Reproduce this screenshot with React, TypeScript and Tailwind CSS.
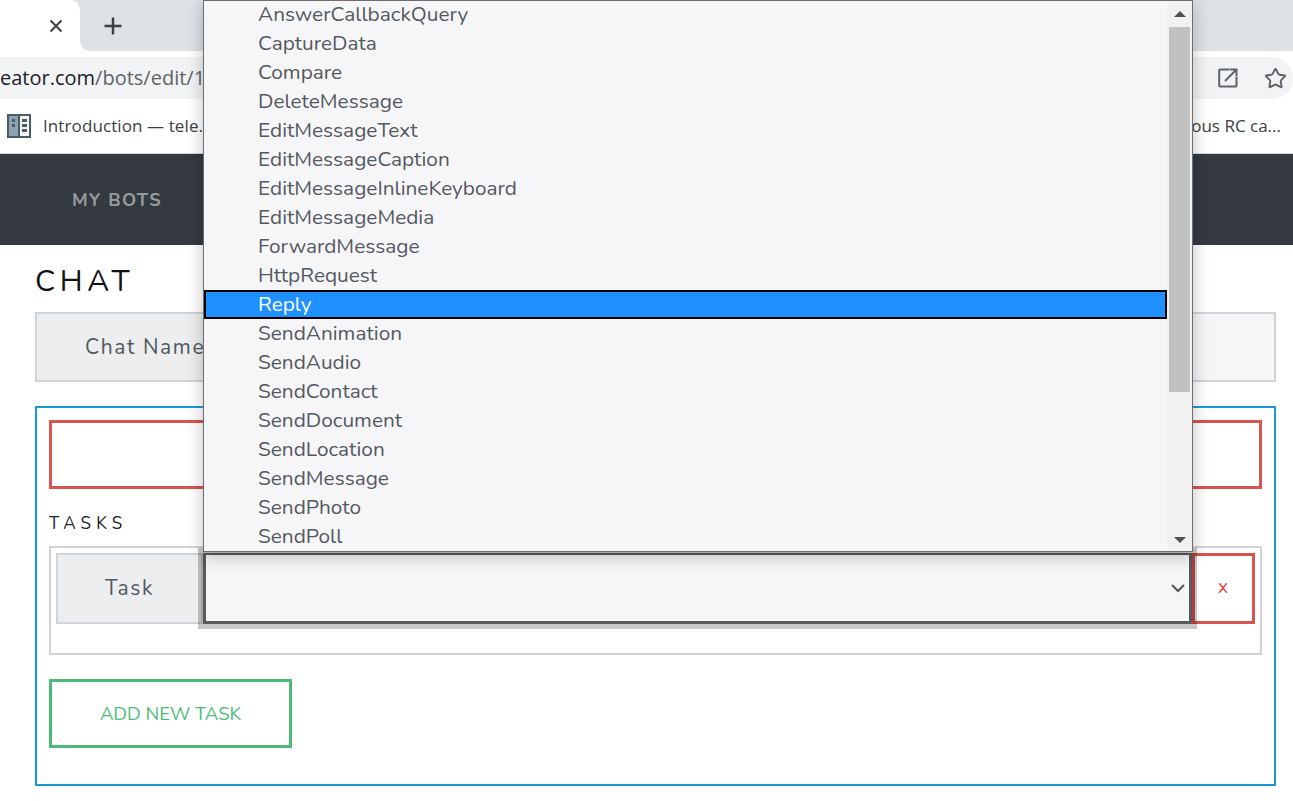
import React from "react";
import { Star } from "lucide-react";

const actions = [
  "AnswerCallbackQuery",
  "CaptureData",
  "Compare",
  "DeleteMessage",
  "EditMessageText",
  "EditMessageCaption",
  "EditMessageInlineKeyboard",
  "EditMessageMedia",
  "ForwardMessage",
  "HttpRequest",
  "Reply",
  "SendAnimation",
  "SendAudio",
  "SendContact",
  "SendDocument",
  "SendLocation",
  "SendMessage",
  "SendPhoto",
  "SendPoll",
];

const App: React.FC = () => {
  return (
    <div className="relative h-[801px] w-[1293px] overflow-hidden bg-white font-['Nunito','Noto_Sans',sans-serif]">
      {/* Browser tabs */}
      <div className="flex h-[51px] bg-white">
        <div className="w-[80px] bg-[#dee1e6]">
          <div className="flex h-full items-center justify-end rounded-tr-[10px] bg-white pr-[16px]">
            <svg width="16" height="16" viewBox="0 0 16 16" className="text-[#3c4043]">
              <path d="M2.5 2.5 L13.5 13.5 M13.5 2.5 L2.5 13.5" stroke="currentColor" strokeWidth="2" />
            </svg>
          </div>
        </div>
        <div className="flex flex-1 items-center rounded-bl-[10px] bg-[#dee1e6] pl-[23px]">
          <svg width="20" height="20" viewBox="0 0 20 20" className="text-[#3c4043]">
            <path d="M10 1.5 V18.5 M1.5 10 H18.5" stroke="currentColor" strokeWidth="2.5" />
          </svg>
        </div>
      </div>

      {/* Address bar */}
      <div className="flex h-[48px] items-end bg-white">
        <div className="flex h-[42px] w-[1293px] items-center overflow-hidden rounded-r-[21px] bg-[#f1f3f4] pr-[6px] font-['Open_Sans',sans-serif] text-[20px]">
          <span className="text-[#202124]">eator.com</span>
          <span className="text-[#5f6368]">/bots/edit/1</span>
          <div className="ml-auto flex items-center gap-[26px]">
            <svg width="20" height="20" viewBox="0 0 20 20" className="text-[#5f6368]">
              <path d="M11 1.5 H2 A0.8 0.8 0 0 0 1.2 2.3 V17.7 A0.8 0.8 0 0 0 2 18.5 H17.7 A0.8 0.8 0 0 0 18.5 17.7 V9 M18 2 L7 13 M11.5 1.5 H18.5 V8.5" fill="none" stroke="currentColor" strokeWidth="2" />
            </svg>
            <Star size={23} strokeWidth={2} className="text-[#5f6368]" />
          </div>
        </div>
      </div>

      {/* Bookmarks */}
      <div className="flex h-[55px] items-center justify-between border-b border-[#d5d8dc] bg-white pl-[7px] pr-[12px] font-['Open_Sans',sans-serif] text-[17px] text-[#3c4043]">
        <div className="flex items-center gap-[12px]">
          <svg width="24" height="24" viewBox="0 0 24 24">
            <rect width="24" height="24" fill="#4c5b66" />
            <rect x="2" y="2" width="9" height="20" fill="#8ba3b3" />
            <rect x="13" y="2" width="9" height="20" fill="#f2f4f5" />
            <rect x="5" y="5" width="3" height="3" fill="#4c5b66" />
            <rect x="5" y="10" width="3" height="3" fill="#4c5b66" />
            <rect x="15" y="5" width="5" height="3" fill="#4c5b66" />
            <rect x="15" y="10" width="5" height="3" fill="#4c5b66" />
            <rect x="15" y="15" width="5" height="3" fill="#4c5b66" />
          </svg>
          <span className="tracking-[0.1px]">Introduction — tele.</span>
        </div>
        <span>ous RC ca...</span>
      </div>

      {/* Navbar */}
      <nav className="flex h-[91px] items-center bg-[#343a40] pl-[72px] pt-[2px]">
        <span className="text-[18px] font-bold tracking-[1.5px] text-white/50">MY BOTS</span>
      </nav>

      {/* Page */}
      <main className="pl-[35px] pr-[17px]">
        <h1 className="mt-[17px] h-[50px] text-[30px] leading-[40px] tracking-[4.6px] text-[#111]">CHAT</h1>

        <div className="flex h-[70px] border-2 border-[#ced4da]">
          <div className="flex w-[200px] items-center bg-[#eceef0] pl-[48px] pt-[2px] text-[21px] tracking-[1.6px] text-[#52585e]">
            <span className="whitespace-nowrap">Chat Name</span>
          </div>
          <div className="flex-1 bg-[#f6f6f9]"></div>
        </div>

        <section className="mt-[24px] h-[380px] border-2 border-[#1b9ad1] px-[12px] pt-[12px]">
          <div className="h-[69px] border-[3px] border-[#d9534f]"></div>

          <h2 className="mt-[24px] h-[33px] pt-[1px] text-[17px] leading-[20px] tracking-[5.2px] text-[#222]">TASKS</h2>

          <div className="h-[109px] border-2 border-[#d2d2d2] p-[5px]">
            <div className="flex h-[71px]">
              <div className="flex w-[147px] items-center justify-center border-2 border-[#ced4da] bg-[#eceef0] text-[21px] tracking-[1.6px] text-[#52585e]">
                Task
              </div>
              <div className="relative flex flex-1 items-center justify-end border-[3px] border-t-2 border-[#5a5a5a] bg-[#f6f6f9] pr-[3px] shadow-[0_0_0_5px_rgba(0,0,0,0.22)]">
                <svg width="16" height="10" viewBox="0 0 16 10" className="text-[#555]">
                  <path d="M2 2 L8 8 L14 2" fill="none" stroke="currentColor" strokeWidth="2" />
                </svg>
              </div>
              <div className="flex w-[63px] items-center justify-center border-[3px] border-[#d9534f] pb-[3px] pr-[1px] text-[20px] text-[#d9534f]">
                x
              </div>
            </div>
          </div>

          <button className="mt-[24px] flex h-[69px] w-[243px] items-center justify-center border-[3px] border-[#4cbb77] pt-[2px] text-[18.5px] text-[#4cbb77]">
            ADD NEW TASK
          </button>
        </section>
      </main>

      {/* Open select list, lies over the page */}
      <div className="absolute left-[203px] top-0 flex h-[552px] w-[990px] overflow-hidden border border-[#6e6e6e] bg-[#f6f6f9] text-[20.8px] text-[#54595f] shadow-[0_4px_16px_rgba(0,0,0,0.25)]">
        <ul className="-mt-px flex-1 overflow-hidden">
          {actions.map((name) => (
            <li
              key={name}
              className={
                name === "Reply"
                  ? "h-[29px] bg-[#1e90ff] pl-[54px] leading-[28px] text-white outline-2 -outline-offset-2 outline-black"
                  : "h-[29px] pl-[54px] leading-[29px]"
              }
            >
              {name}
            </li>
          ))}
        </ul>
        {/* Scrollbar */}
        <div className="flex w-[25px] flex-col items-center bg-[#f1f1f1]">
          <div className="flex h-[26px] items-center">
            <div className="h-0 w-0 border-x-[6px] border-b-[6px] border-x-transparent border-b-[#505050]"></div>
          </div>
          <div className="h-[365px] w-[21px] bg-[#c1c1c1]"></div>
          <div className="flex flex-1 items-end pb-[8px]">
            <div className="h-0 w-0 border-x-[6px] border-t-[6px] border-x-transparent border-t-[#505050]"></div>
          </div>
        </div>
      </div>
    </div>
  );
};

export default App;
